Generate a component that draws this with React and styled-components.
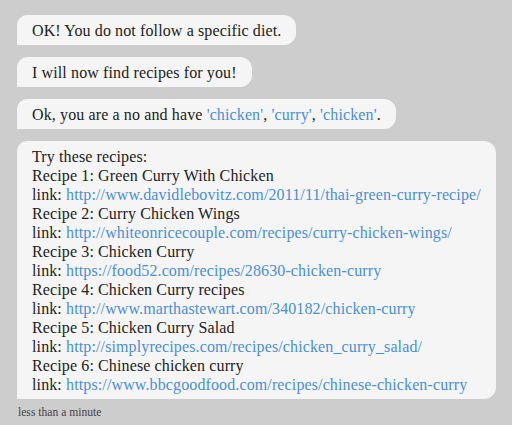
import React from "react";
import styled, { createGlobalStyle } from "styled-components";

const Global = createGlobalStyle`
  html, body {
    margin: 0;
    padding: 0;
    background: #cdcdcd;
  }
  body {
    font-family: "Liberation Serif", "Times New Roman", serif;
  }
`;

const Chat = styled.div`
  display: flex;
  flex-direction: column;
  align-items: flex-start;
  gap: 12px;
  padding: 15px 8px 0 17px;
`;

const Bubble = styled.div`
  background: #f5f5f5;
  color: #222;
  font-family: "Liberation Serif", "Times New Roman", serif;
  font-size: 16px;
  letter-spacing: 0.12px;
  line-height: 19px;
  padding: 6px 15px 5px;
  border-radius: 10px 12px 12px 0;
`;

const Line = styled.div`
  white-space: nowrap;
`;

const Link = styled.span`
  color: #4a8fd6;
`;

const Stamp = styled.div`
  margin-top: -5px;
  font-family: "Liberation Serif", "Times New Roman", serif;
  font-size: 11.6px;
  color: #444;
  padding-left: 1px;
`;

const recipes = [
  ["Green Curry With Chicken", "http://www.davidlebovitz.com/2011/11/thai-green-curry-recipe/"],
  ["Curry Chicken Wings", "http://whiteonricecouple.com/recipes/curry-chicken-wings/"],
  ["Chicken Curry", "https://food52.com/recipes/28630-chicken-curry"],
  ["Chicken Curry recipes", "http://www.marthastewart.com/340182/chicken-curry"],
  ["Chicken Curry Salad", "http://simplyrecipes.com/recipes/chicken_curry_salad/"],
  ["Chinese chicken curry", "https://www.bbcgoodfood.com/recipes/chinese-chicken-curry"],
];

export default function App() {
  return (
    <>
      <Global />
      <Chat>
        <Bubble>OK! You do not follow a specific diet.</Bubble>
        <Bubble>I will now find recipes for you!</Bubble>
        <Bubble>
          Ok, you are a no and have <Link>'chicken'</Link>, <Link>'curry'</Link>, <Link>'chicken'</Link>.
        </Bubble>
        <Bubble>
          <Line>Try these recipes:</Line>
          {recipes.map(([name, url], i) => (
            <React.Fragment key={i}>
              <Line>Recipe {i + 1}: {name}</Line>
              <Line>link: <Link>{url}</Link></Line>
            </React.Fragment>
          ))}
        </Bubble>
        <Stamp>less than a minute</Stamp>
      </Chat>
    </>
  );
}
